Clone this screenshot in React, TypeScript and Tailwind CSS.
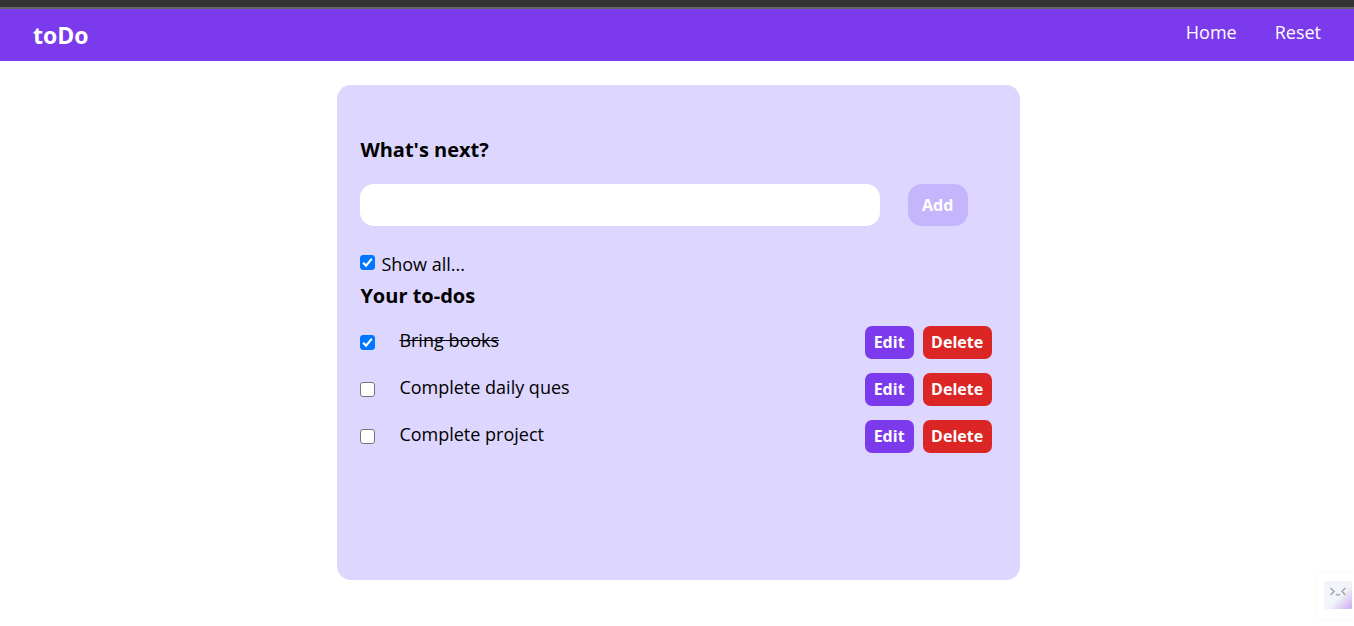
import { useState, type FormEvent } from "react";

type Todo = { id: number; text: string; done: boolean };

const initialTodos: Todo[] = [
  { id: 1, text: "Bring books", done: true },
  { id: 2, text: "Complete daily ques", done: false },
  { id: 3, text: "Complete project", done: false },
];

function Navbar({ onReset }: { onReset: () => void }) {
  return (
    <nav className="flex items-start justify-between border-t-2 border-[#666666] bg-[#7c3aed] px-[33px] pt-[11px] pb-[11px] text-white">
      <span className="text-[23px] leading-[30px] font-bold">toDo</span>
      <ul className="flex gap-[38px] text-[18px] leading-6">
        <li>
          <a href="#home">Home</a>
        </li>
        <li>
          <a href="#reset" onClick={onReset}>
            Reset
          </a>
        </li>
      </ul>
    </nav>
  );
}

function Checkbox({ id, label, checked, onChange }: { id?: string; label?: string; checked: boolean; onChange: () => void }) {
  return (
    <span className="grid size-[15px] shrink-0">
      <input
        id={id}
        type="checkbox"
        aria-label={label}
        checked={checked}
        onChange={onChange}
        className="col-start-1 row-start-1 size-[15px] appearance-none rounded-[3px] border border-[#767676] bg-white checked:border-[#0075ff] checked:bg-[#0075ff]"
      />
      {checked && (
        <svg viewBox="0 0 15 15" aria-hidden="true" className="pointer-events-none col-start-1 row-start-1 size-[15px]">
          <path d="M3.2 7.8 6 10.6 11.8 3.8" fill="none" stroke="white" strokeWidth="2.1" />
        </svg>
      )}
    </span>
  );
}

function Assistant() {
  return (
    <button
      type="button"
      aria-label="Assistant"
      className="fixed right-0 bottom-[7px] rounded-l-lg bg-white pt-2 pr-0.5 pb-2.5 pl-2 shadow-[0_0_3px_rgba(0,0,0,0.06)]"
    >
      <svg viewBox="0 0 28 28" className="size-7">
        <defs>
          <linearGradient id="face" x1="0" y1="0" x2="1" y2="1">
            <stop offset="0.55" stopColor="#f1f5f9" />
            <stop offset="1" stopColor="#cfa9f2" />
          </linearGradient>
        </defs>
        <rect width="28" height="28" rx="1.5" fill="url(#face)" />
        <path d="M6.5 7 10 10.5 6.5 14M21.5 7 18 10.5 21.5 14M12 13q2 2.4 4 0" fill="none" stroke="#a3a8b0" strokeWidth="1.6" />
      </svg>
    </button>
  );
}

export default function App() {
  const [todos, setTodos] = useState(initialTodos);
  const [text, setText] = useState("");
  const [showAll, setShowAll] = useState(true);

  const addTodo = (event: FormEvent) => {
    event.preventDefault();
    if (!text.trim()) return;
    setTodos([...todos, { id: Date.now(), text: text.trim(), done: false }]);
    setText("");
  };

  const editTodo = (todo: Todo) => {
    setText(todo.text);
    setTodos(todos.filter((item) => item.id !== todo.id));
  };

  const visible = todos.filter((todo) => showAll || !todo.done);

  return (
    <div className="min-h-screen bg-white font-['Open_Sans','Noto_Sans',sans-serif] text-black">
      <div className="h-[7px] bg-[#333333]" />
      <Navbar onReset={() => setTodos([])} />
      <main className="py-6 pl-[3px]">
        <section className="mx-auto min-h-[495px] w-[50.5%] min-w-[660px] rounded-[14px] bg-[#ddd6fe] pt-[51px] pr-7 pb-6 pl-[23px]">
          <h2 className="text-[20px] leading-7 font-bold">
            <label htmlFor="new-todo">What's next?</label>
          </h2>
          <form onSubmit={addTodo} className="mt-5 flex gap-7 pr-6">
            <input
              id="new-todo"
              type="text"
              value={text}
              onChange={(event) => setText(event.target.value)}
              className="h-[42px] min-w-0 flex-1 rounded-[14px] bg-white px-4 text-[18px] outline-none"
            />
            <button type="submit" disabled={!text.trim()} className="w-[60px] rounded-[14px] bg-[#7c3aed] text-[16px] font-bold text-white disabled:bg-[#c4b5fd]">
              Add
            </button>
          </form>
          <div className="mt-[26px] flex gap-1.5 text-[18px] leading-6">
            <span className="pt-[3px]">
              <Checkbox id="show-all" checked={showAll} onChange={() => setShowAll(!showAll)} />
            </span>
            <label htmlFor="show-all">Show all...</label>
          </div>
          <h2 className="mt-1.5 text-[20px] leading-7 font-bold">Your to-dos</h2>
          <ul className="mt-4 flex flex-col gap-3.5">
            {visible.map((todo) => (
              <li key={todo.id} className="flex items-center">
                <Checkbox
                  label={todo.text}
                  checked={todo.done}
                  onChange={() => setTodos(todos.map((item) => (item.id === todo.id ? { ...item, done: !item.done } : item)))}
                />
                <span className={todo.done ? "ml-6 flex-1 pb-1.5 text-[18px] leading-6 line-through" : "ml-6 flex-1 pb-1.5 text-[18px] leading-6"}>
                  {todo.text}
                </span>
                <div className="flex gap-[9px] text-[16px] leading-6 font-bold text-white">
                  <button type="button" onClick={() => editTodo(todo)} className="h-[33px] w-[49px] rounded-[7px] bg-[#7c3aed] pb-0.5">
                    Edit
                  </button>
                  <button
                    type="button"
                    onClick={() => setTodos(todos.filter((item) => item.id !== todo.id))}
                    className="h-[33px] w-[69px] rounded-[7px] bg-[#dc2626] pb-0.5"
                  >
                    Delete
                  </button>
                </div>
              </li>
            ))}
          </ul>
        </section>
      </main>
      <Assistant />
    </div>
  );
}
